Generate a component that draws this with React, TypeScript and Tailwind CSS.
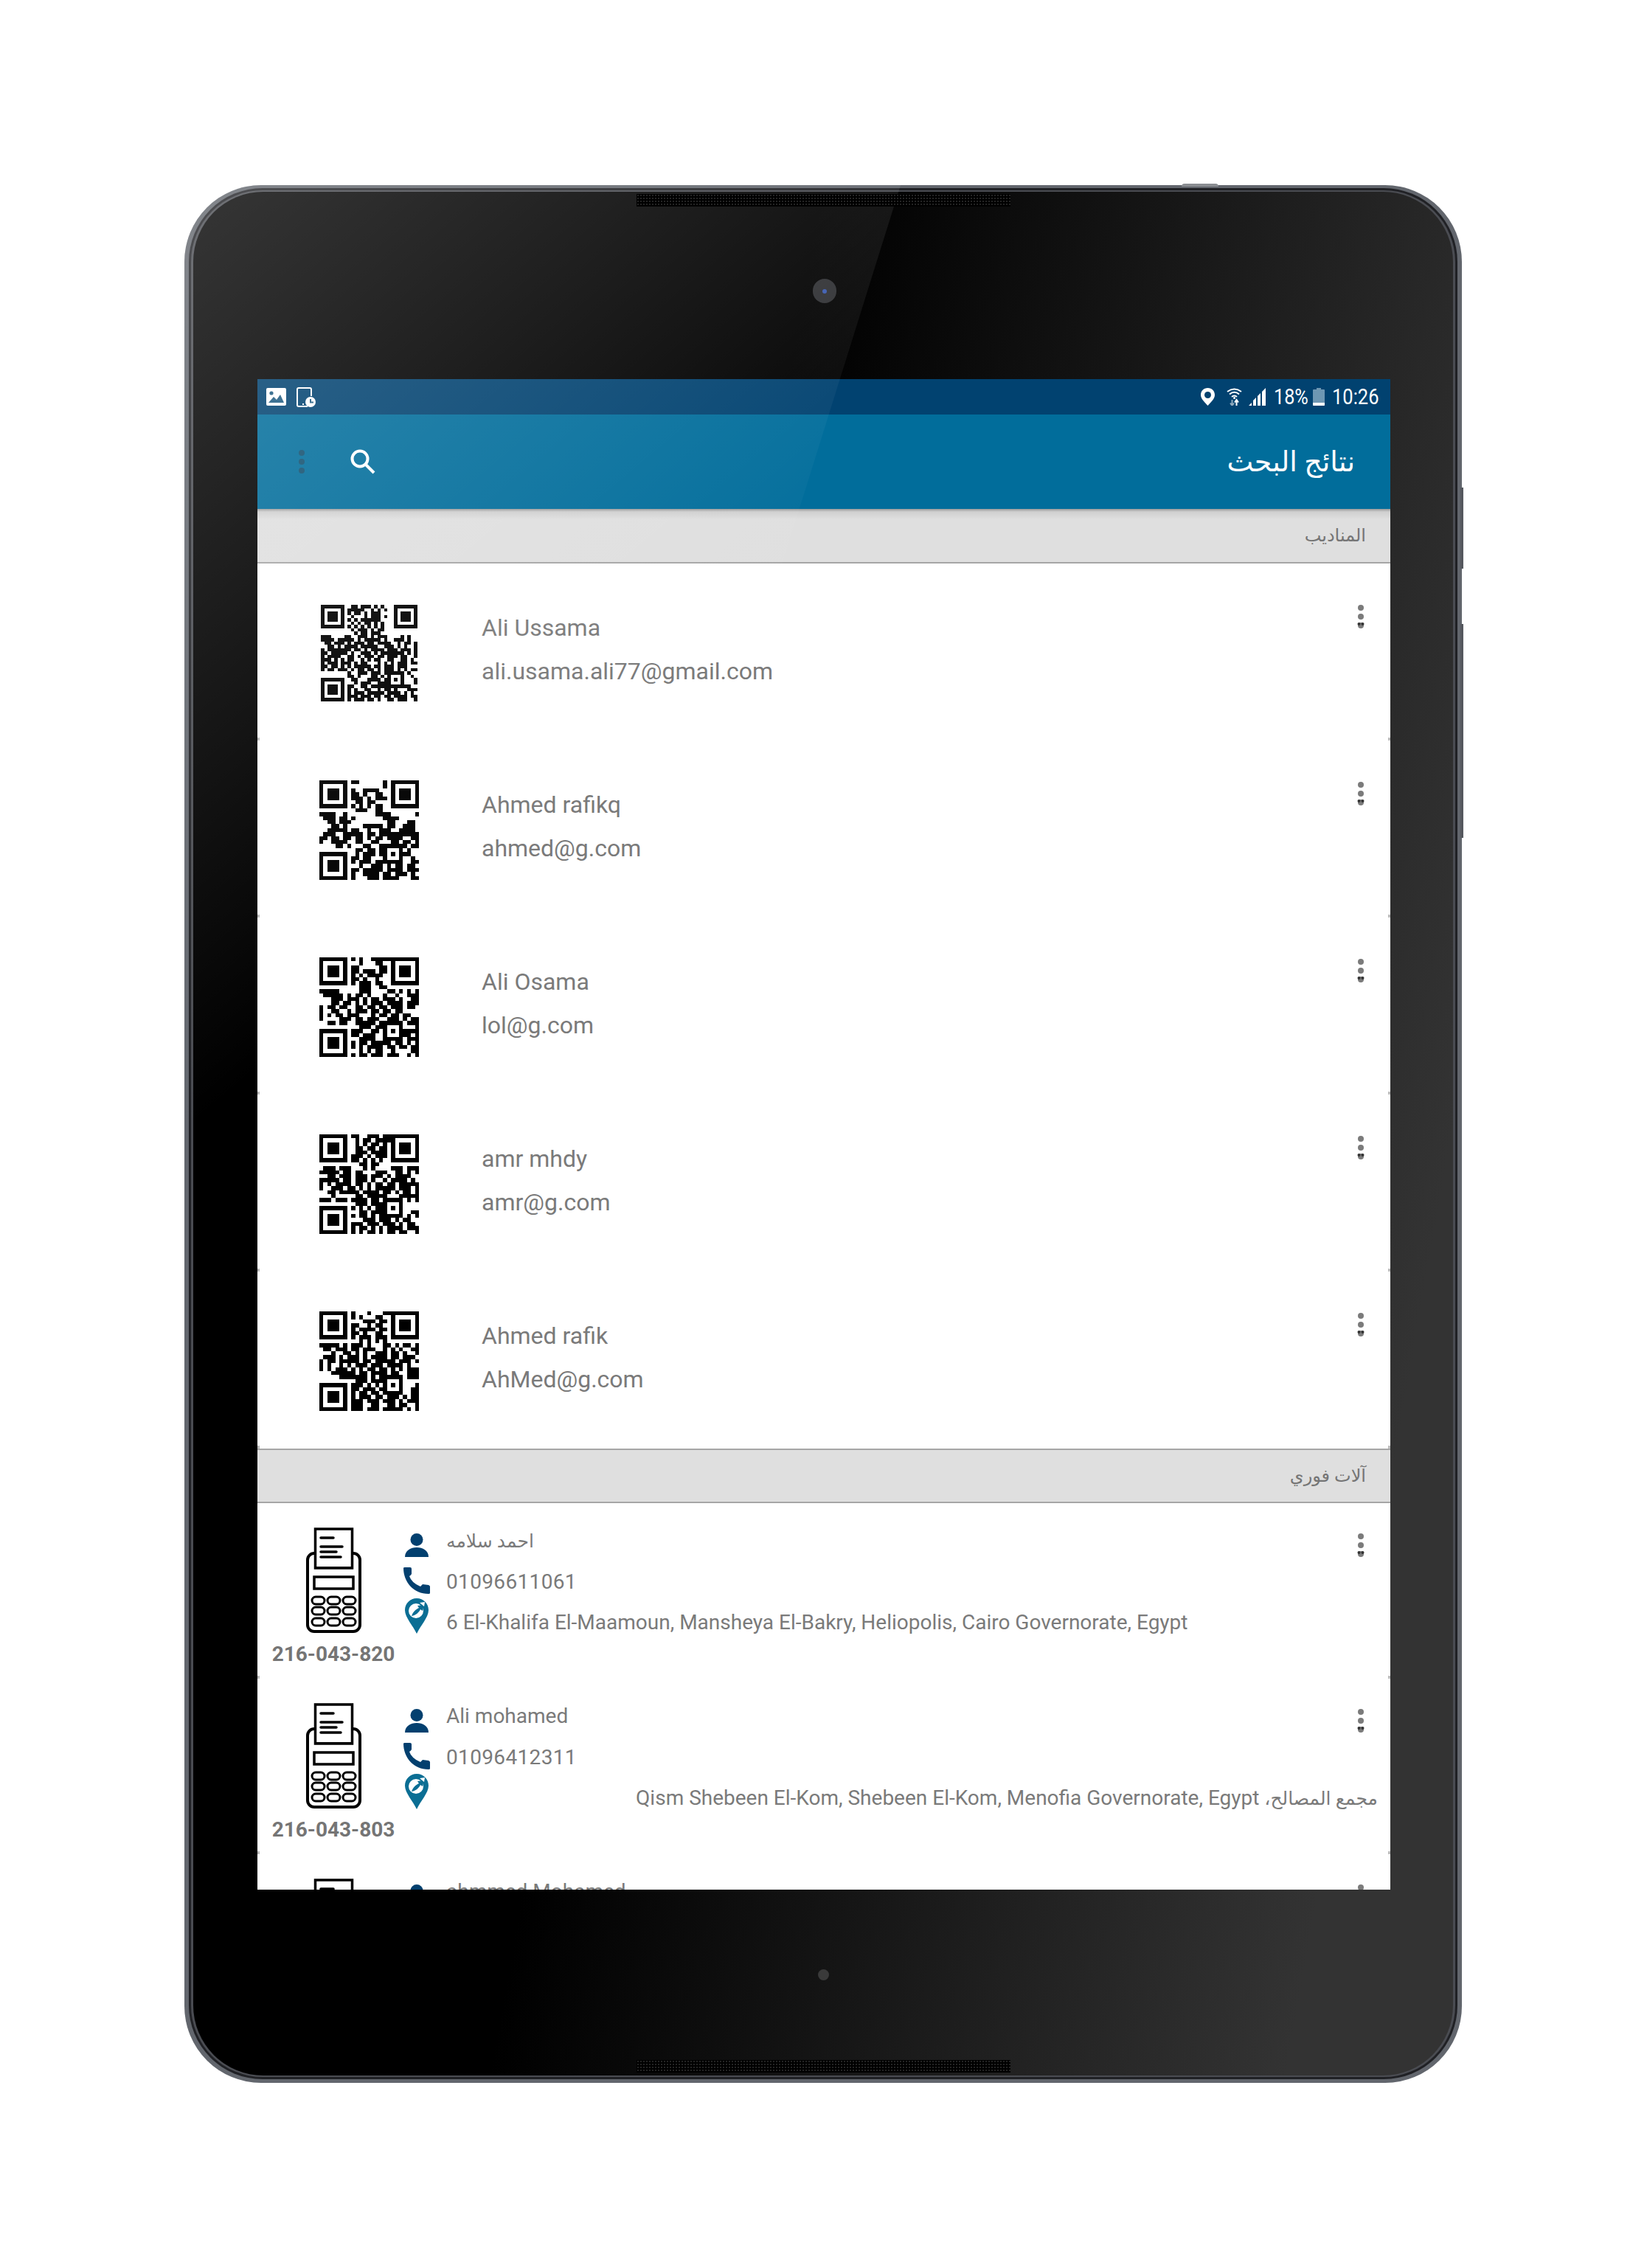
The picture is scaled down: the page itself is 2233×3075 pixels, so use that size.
import React from "react";

const QR_ROWS: string[][] = [
  [
    ".........##.###.#.#..........",
    "........#####..#.#.#.........",
    "........#.##.#.###...........",
    ".........#...#.###.#.........",
    "........#.#.######...........",
    ".........#.#.##.#.#..........",
    "........#.#.#.#.#.#..........",
    ".........#.###.#.##..........",
    "..........#.##.###...........",
    "###....##..###.#.###....#.#..",
    "####.#####.#.#####.#..###.#..",
    ".##.###.#.###.##.####..#.##.#",
    "..##.#.####.#####..###.#.#..#",
    "#.#######.##.#.####.###.###.#",
    "##.#####.#..###.#.#######.#.#",
    "#.####..##.#.###.##.###.##..#",
    "###.#.#.##..#.#.##..##..##.#.",
    "#.###.###.#.##...#.#.#.###.##",
    "##.##.#.#.#####.##.###.###...",
    "#.##.###.#.##.##.#.###.#.#.##",
    "........#..###.###.##...#.#..",
    "........##.#...##.#.##..#..#.",
    ".........##...####.##.......#",
    "..........#.###..###........#",
    "........##..##.#####.....##..",
    "........#.#..##..#.##.#...###",
    "........#.###.#####.####.#.#.",
    "........###.###.##.##.####.##",
    "........#.###.##.#..##.###..#",
  ],
  [
    "........##......#........",
    "................#........",
    "........#..####..........",
    "........##.#..##.........",
    "........###.#.###........",
    ".........##.##...........",
    "........#.#.#.##.........",
    ".........###..##.........",
    "####..#.......####......#",
    ".###.##.#.......####.....",
    "..##.###.........##...##.",
    "...##.#....#####.##..###.",
    "..#####.##..#..###..####.",
    ".###..#####.##.##########",
    "##.##.##.##.#.##.####..##",
    "#..####..##..##...##.##.#",
    "....##.#...##..#.....#.##",
    ".........##.##.#......#..",
    ".........#.###.#.....##..",
    "........##.##..........#.",
    "........#.###.##.......##",
    "..........#..###.#.##.##.",
    "........##.#####.####.###",
    "........#..####.##.###.#.",
    "........#...###.####...##",
  ],
  [
    "........#.#..#####.......",
    "..........#...##.........",
    "........##.....##........",
    "........##.###.##........",
    "........#.#.####.........",
    "........##.#..#..........",
    "........#.###.##.........",
    "..........###..##........",
    "#####.....###....##.#.#.#",
    ".#####.#.##.#...#..#..###",
    "...###.###.#.##.###.#..##",
    "...##.##.#.#.###.####.###",
    "#.##.##..##.##.##.###.##.",
    "#..##..#.###.##.##.##....",
    "#.#.##.###...#.##.##.##..",
    "#....###.##.###..###.#.##",
    "..##.##..#####.#......###",
    "..........###.##........#",
    "........###..##......####",
    "........##.###.......##.#",
    "..........####........###",
    "........#.##.#####.##.#.#",
    "........#.#.####.##.##.##",
    "..........#.#.##..#....##",
    "........#.##.###.###..#.#",
  ],
  [
    "........##..###.##.......",
    ".........#.##.####.......",
    ".........#.#.##.#........",
    ".........##.##.##........",
    ".........###.####........",
    "........###.#.###........",
    "........##.#.#.#.........",
    "..........##.##..........",
    ".###.###...#.#....###.###",
    "#####.##.##...###..##.#.#",
    "..##.###.###.###.#.####..",
    "#####.##.###.#..#.####.#.",
    "#.#.####.##.#.##.##.#####",
    "#..###.##.#.#.#####.###.#",
    "..##.#####.####.##.#.##.#",
    "...#.....##.#####...#####",
    "###.###.####.##.#.....#.#",
    ".........###.###.........",
    "........#.#.#.##.........",
    "..........##.###.......##",
    "........#.##.#.#......#.#",
    "...........###.###.#.##..",
    "........###.###.###.#.##.",
    "........#.##.#.#.####.###",
    "........#.#.##.#.##.##..#",
  ],
  [
    "........#...#...##.......",
    "........#.#...##.........",
    "...........###.##........",
    "........##..#.##.........",
    "........#.####.##........",
    "........##.#..##.........",
    "........#.###.###........",
    "..........#.#.#.#........",
    "#####.#.###.#...##.#.##.#",
    ".##.###.##.###..#.#.#..##",
    "...#..##.#.#..###.##.#..#",
    ".###.#.###.#.####.##.###.",
    "#.##.#####.##.#####.###.#",
    "#.#..#.#.###.###.####.#..",
    "#.#.###.#.#.##.##.#.#.###",
    "...######.##.####.##..###",
    ".....#######.#.##.....###",
    ".........###.###.#.......",
    "........###.#.#.#.......#",
    "........##.###.#.......##",
    "........#.##.##........##",
    "........#.###.##.###.#.##",
    "........###.###.###.#.###",
    "........###..##..##.##..#",
    "........###.###.#####.#.#",
  ],
];

const QRCode = ({ index }: { index: number }) => {
  const rows = QR_ROWS[index];
  const n = rows.length;
  const finders = [
    [0, 0],
    [n - 7, 0],
    [0, n - 7],
  ];
  return (
    <svg viewBox={`0 0 ${n} ${n}`} shapeRendering="crispEdges" className="block w-full h-full">
      {rows.map((row, y) =>
        row.split("").map((c, x) =>
          c === "#" ? <rect key={`${x}-${y}`} x={x} y={y} width={1} height={1} fill="#000" /> : null,
        ),
      )}
      {finders.map(([x, y]) => (
        <g key={`${x}-${y}`}>
          <rect x={x} y={y} width={7} height={7} fill="#000" />
          <rect x={x + 1} y={y + 1} width={5} height={5} fill="#fff" />
          <rect x={x + 2} y={y + 2} width={3} height={3} fill="#000" />
        </g>
      ))}
      <rect x={n - 9} y={n - 9} width={5} height={5} fill="#000" />
      <rect x={n - 8} y={n - 8} width={3} height={3} fill="#fff" />
      <rect x={n - 7} y={n - 7} width={1} height={1} fill="#000" />
    </svg>
  );
};

const Kebab = () => (
  <svg width="10" height="32" viewBox="0 0 10 32" className="block">
    <circle cx="5" cy="4" r="4" fill="#7b7b7b" />
    <circle cx="5" cy="16" r="4" fill="#7b7b7b" />
    <circle cx="5" cy="28" r="4" fill="#7b7b7b" />
    <circle cx="2.5" cy="26" r="2" fill="#333" />
    <circle cx="7.5" cy="26" r="2" fill="#333" />
  </svg>
);

const PersonIcon = () => (
  <svg width="32" height="32" viewBox="0 0 32 32" className="block">
    <circle cx="16" cy="8.5" r="8.5" fill="#03406f" />
    <path d="M0 32C0 23 8 19 16 19S32 23 32 32Z" fill="#03406f" />
  </svg>
);

const PhoneIcon = () => (
  <svg width="36" height="36" viewBox="0 0 36 36" className="block">
    <path
      d="M0 1Q0 0 2 0L9 0Q11 0 11 2L11 9Q10 11 8 12Q11 21 23 26L26 23L34 24Q36 25 36 26L36 35Q36 36 34 36C14 36 0 20 0 1Z"
      fill="#03406f"
    />
  </svg>
);

const PinIcon = () => (
  <svg width="32" height="48" viewBox="0 0 32 48" className="block">
    <path d="M16 0C7 0 0 7 0 16C0 26 11 37 16 48C21 37 32 26 32 16C32 7 25 0 16 0Z" fill="#0b6e94" />
    <circle cx="15" cy="17" r="10" fill="#fff" />
    <path d="M9 24C11 18 15 15 19 13L17 10L25 9L24 17L21 15C19 19 15 23 9 24Z" fill="#0b6e94" />
    <path d="M20 6L27 5L26 11Z" fill="#fff" />
  </svg>
);

const PosIcon = () => (
  <svg width="75" height="143" viewBox="0 0 75 143" className="block">
    <rect x="2" y="35" width="71" height="106" rx="9" fill="#fff" stroke="#000" strokeWidth="4" />
    <rect x="12.5" y="2" width="50" height="53" fill="#fff" stroke="#000" strokeWidth="3.5" />
    <path d="M11 53H64V56H11Z" fill="#000" />
    <path d="M20 14H37M20 26H49M20 33H41M20 40H47" stroke="#000" strokeWidth="3.5" strokeLinecap="round" />
    <rect x="11" y="67" width="53" height="16" fill="#fff" stroke="#000" strokeWidth="3.5" />
    {[94, 108, 123].map((y) =>
      [8, 29, 50].map((x) => (
        <rect key={`${x}-${y}`} x={x} y={y} width="17" height="10" rx="5" fill="#fff" stroke="#000" strokeWidth="3" />
      )),
    )}
  </svg>
);

const SectionHeader = ({ title, top }: { title: string; top?: boolean }) => (
  <div
    className={`h-[74px] flex items-center justify-end pr-[33px] bg-[#dfdfdf] border-b-2 border-[#a6a6a6] ${
      top
        ? "bg-[linear-gradient(#9a9a9a,#d0d0d0_4px,#dfdfdf_14px)]"
        : "border-t-2"
    }`}
  >
    <span className="text-[24px] text-[#757575]" dir="rtl">
      {title}
    </span>
  </div>
);

const members = [
  { name: "Ali Ussama", email: "ali.usama.ali77@gmail.com", top: "mt-[56px] ml-[86px] w-[131px] h-[131px]" },
  { name: "Ahmed rafikq", email: "ahmed@g.com", top: "mt-[54px] ml-[84px] w-[135px] h-[135px]" },
  { name: "Ali Osama", email: "lol@g.com", top: "mt-[54px] ml-[84px] w-[135px] h-[135px]" },
  { name: "amr mhdy", email: "amr@g.com", top: "mt-[54px] ml-[84px] w-[135px] h-[135px]" },
  { name: "Ahmed rafik", email: "AhMed@g.com", top: "mt-[54px] ml-[84px] w-[135px] h-[135px]" },
];

const EdgeTicks = () => (
  <>
    <span className="absolute left-0 bottom-0 w-[3px] h-[4px] bg-[#bdbdbd]" />
    <span className="absolute right-0 bottom-0 w-[3px] h-[4px] bg-[#bdbdbd]" />
  </>
);

const MemberRow = ({ member, index }: { member: (typeof members)[number]; index: number }) => (
  <div className="relative h-[240px] flex items-start bg-white">
    <div className={`shrink-0 ${member.top}`}>
      <QRCode index={index} />
    </div>
    <div className={`pt-[57px] text-[32px] leading-[60px] text-[#7a7a7a] ${index === 0 ? "ml-[87px]" : "ml-[85px]"}`}>
      <div>{member.name}</div>
      <div className="-mt-[1px]">{member.email}</div>
    </div>
    <div className="ml-auto mr-[35px] mt-[56px]">
      <Kebab />
    </div>
    <EdgeTicks />
  </div>
);

const machines = [
  {
    code: "216-043-820",
    owner: <span className="text-[25px]">احمد سلامه</span>,
    phone: "01096611061",
    address: "6 El-Khalifa El-Maamoun, Mansheya El-Bakry, Heliopolis, Cairo Governorate, Egypt",
    rtl: false,
  },
  {
    code: "216-043-803",
    owner: "Ali mohamed",
    phone: "01096412311",
    address: (
      <>
        <span className="text-[25px]">مجمع المصالح،</span> Qism Shebeen El-Kom, Shebeen El-Kom, Menofia Governorate,
        Egypt
      </>
    ),
    rtl: true,
  },
  // only the top of this row is on screen
  { owner: "ahmmed Mohamed", rtl: false },
];

const MachineRow = ({ machine }: { machine: (typeof machines)[number] }) => (
  <div className="relative h-[238px] flex items-start bg-white">
    <div className="w-[185px] pl-[21px] pt-[33px] shrink-0 flex flex-col items-center">
      <PosIcon />
      {machine.code && (
        <div className="mt-[13px] text-[28px] leading-[32px] font-bold text-[#757575] whitespace-nowrap">
          {machine.code}
        </div>
      )}
    </div>
    <div className="w-[62px] shrink-0 pt-[41px] flex flex-col items-center">
      <PersonIcon />
      <div className="mt-[14px]">
        <PhoneIcon />
      </div>
      <div className="mt-[6px]">
        <PinIcon />
      </div>
    </div>
    <div className="flex-1 min-w-0 ml-[9px] pr-[17px] pt-[23px] text-[28px] text-[#7a7a7a]">
      <div className="h-[56px] leading-[56px]">{machine.owner}</div>
      {machine.phone && <div className="h-[56px] leading-[56px] tracking-[.35px]">{machine.phone}</div>}
      {machine.address && (
        <div className="h-[54px] leading-[54px] whitespace-nowrap" dir={machine.rtl ? "rtl" : "ltr"}>
          {machine.address}
        </div>
      )}
    </div>
    <div className="absolute right-[35px] top-[41px]">
      <Kebab />
    </div>
    <EdgeTicks />
  </div>
);

const StatusBar = () => (
  <div className="h-[48px] bg-[#014270] flex items-center pl-[12px] pr-[16px] text-white">
    <svg width="27" height="24" viewBox="0 0 27 24" className="block">
      <rect width="27" height="24" rx="2" fill="#fff" />
      <circle cx="7" cy="7" r="2.6" fill="#1d5a80" />
      <path d="M3 20L10 12L14 16L19 9L24 20Z" fill="#1d5a80" />
    </svg>
    <svg width="26" height="27" viewBox="0 0 26 27" className="block ml-[14px]">
      <path d="M15 26H3Q1 26 1 24V3Q1 1 3 1H18Q20 1 20 3V12" fill="none" stroke="#fff" strokeWidth="2" />
      <rect x="8" y="22" width="2" height="2" fill="#fff" />
      <circle cx="19" cy="20" r="7" fill="#fff" />
      <path d="M19 16V20.5H23" fill="none" stroke="#1d5a80" strokeWidth="2" />
    </svg>
    <div className="ml-auto flex items-center">
      <svg width="19" height="24" viewBox="0 0 19 24" className="block">
        <path d="M9.5 0C4 0 0 4 0 9.500C0 15 6 20 9.500 24C13 20 19 15 19 9.500C19 4 15 0 9.500 0Z" fill="#fff" />
        <circle cx="9.500" cy="9.500" r="4.500" fill="#014270" />
      </svg>
      <svg width="21" height="24" viewBox="0 0 21 24" className="block ml-[16px]" fill="none" stroke="#fff">
        <path d="M1 5Q10.500 -2 20 5" strokeWidth="2" />
        <path d="M4 8.500Q10.500 3 17 8.500" strokeWidth="2" />
        <path d="M7 12Q10.500 9 14 12" strokeWidth="2" />
        <circle cx="10.500" cy="13.500" r="1.500" fill="#fff" stroke="none" />
        <path d="M7.500 16V23M5 20.500L7.500 24L10 20.500" stroke="#8fa9bd" strokeWidth="2" />
        <path d="M13.500 24V17M11 19.500L13.500 16L16 19.500" strokeWidth="2" />
      </svg>
      <svg width="23" height="24" viewBox="0 0 23 24" className="block ml-[9px]">
        <path d="M0 24L4 20V24ZM6 24V17L10 13V24ZM12 24V11L16 7V24ZM18 24V5L23 0V24Z" fill="#fff" />
      </svg>
      <span className="w-[46px] ml-[11px] text-[30px] leading-[48px] scale-x-[.84] origin-left whitespace-nowrap">
        18%
      </span>
      <svg width="16" height="24" viewBox="0 0 16 24" className="block ml-[7px]">
        <path d="M5 0H11V2H15Q16 2 16 3V23Q16 24 15 24H1Q0 24 0 23V3Q0 2 1 2H5Z" fill="#6e97b3" />
        <path d="M0 20H16V23Q16 24 15 24H1Q0 24 0 23Z" fill="#fff" />
      </svg>
      <span className="w-[63px] ml-[10px] text-[30px] leading-[48px] scale-x-[.85] origin-left whitespace-nowrap">
        10:26
      </span>
    </div>
  </div>
);

const AppBar = () => (
  <div className="h-[128px] bg-[#016d9b] flex items-center pl-[56px] pr-[48px] text-white">
    <svg width="8" height="32" viewBox="0 0 8 32" className="block">
      <circle cx="4" cy="4" r="4" fill="#12506f" />
      <circle cx="4" cy="16" r="4" fill="#12506f" />
      <circle cx="4" cy="28" r="4" fill="#12506f" />
    </svg>
    <svg width="34" height="34" viewBox="0 0 34 34" className="block ml-[62px]" fill="none" stroke="#fff">
      <circle cx="13" cy="13" r="10.500" strokeWidth="4" />
      <path d="M21 21L32 32" strokeWidth="4" />
    </svg>
    <span className="ml-auto text-[38px] leading-none" dir="rtl">
      نتائج البحث
    </span>
  </div>
);

const Speaker = ({ className }: { className: string }) => (
  <div
    className={`absolute z-10 left-[601px] w-[507px] h-[17px] bg-[#000] bg-[radial-gradient(#242424_1px,transparent_1.2px)] bg-[length:4px_4px] ${className}`}
  />
);

export default function App() {
  return (
    <div className="h-[3075px] bg-white pt-[251px] pl-[250px] [font-family:Roboto,'DejaVu_Sans',sans-serif]">
      <div className="relative w-[1732px] h-[2573px] rounded-[104px] bg-[#62666d] px-[6px] pt-[4px] pb-[5px]">
        <span className="absolute -top-[2px] left-[1352px] w-[50px] h-[4px] rounded-t bg-[#8a8d92]" />
        <span className="absolute -right-[2px] top-[410px] w-[4px] h-[110px] bg-[#55585e]" />
        <span className="absolute -right-[2px] top-[595px] w-[4px] h-[290px] bg-[#55585e]" />
        <div className="h-full rounded-[100px] bg-[#202125] p-[3px]">
          <div className="h-full rounded-[97px] bg-[#4a4c52] py-[2px] px-[3px]">
            <div className="relative h-full rounded-[95px] bg-[linear-gradient(100deg,#000_39.5%,#333_89.5%)] pt-[254px] pl-[87px] overflow-hidden">
              <Speaker className="top-[3px]" />
              <Speaker className="bottom-[4px]" />
              <div className="absolute left-[840px] top-[118px] w-[32px] h-[33px] rounded-full bg-[#2f3033] flex items-center justify-center">
                <span className="w-[6px] h-[6px] rounded-full bg-[#3a5bb0]" />
              </div>
              <span className="absolute left-[847px] top-[2410px] w-[15px] h-[15px] rounded-full bg-[#3a3a3a]" />
              <div className="w-[1536px] h-[2048px] overflow-hidden bg-white">
                <StatusBar />
                <AppBar />
                <SectionHeader title="المناديب" top />
                {members.map((member, i) => (
                  <MemberRow key={member.email} member={member} index={i} />
                ))}
                <SectionHeader title="آلات فوري" />
                {machines.map((machine, i) => (
                  <MachineRow key={i} machine={machine} />
                ))}
              </div>
            </div>
          </div>
        </div>
        {/* reflection over the glass */}
        <div className="absolute inset-0 pointer-events-none rounded-[104px] bg-[linear-gradient(140deg,rgba(255,255,255,.2)_2%,rgba(255,255,255,0)_32%)] [clip-path:polygon(0_0,971px_0,166px_100%,0_100%)]" />
      </div>
    </div>
  );
}
